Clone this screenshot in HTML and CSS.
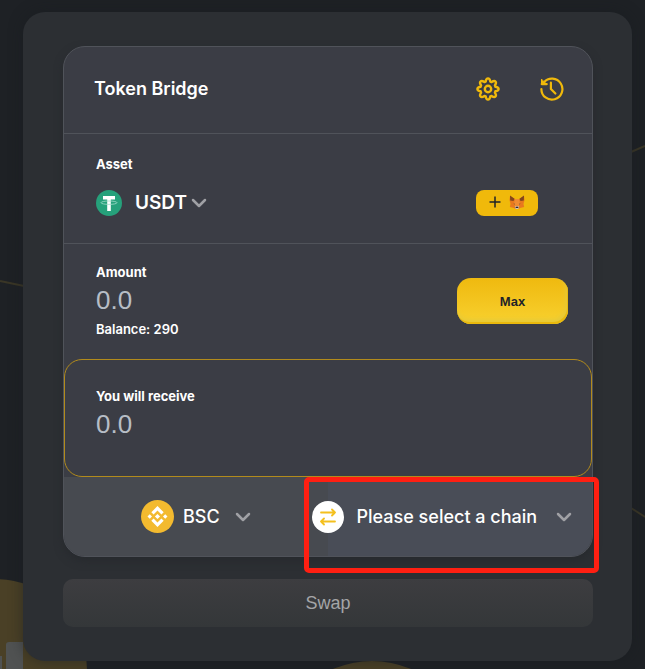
FILE: index.html
```html
<!DOCTYPE html>
<html lang="en">
<head>
<meta charset="utf-8">
<meta name="viewport" content="width=device-width, initial-scale=1">
<title>Token Bridge</title>
<link rel="stylesheet" href="styles.css">
</head>
<body>
<svg class="backdrop" viewBox="0 0 645 669" preserveAspectRatio="xMidYMid slice" aria-hidden="true">
  <path d="M0 281l24 5M631 152l14-6M631 508l14 9" stroke="#3a3626" stroke-width="2" fill="none"/>
  <circle cx="-5" cy="671" r="92" fill="#4a4026"/>
  <path d="M6 669v-24q0-3 3-3h14v27zM0 656h2v13h-2z" fill="#505252"/>
  <circle cx="372" cy="760" r="99" fill="#4a4026"/>
</svg>
<main class="shell">
  <section class="panel">
    <header class="row header">
      <h1 class="title">Token Bridge</h1>
      <div class="tools">
        <button class="icon-button" type="button" aria-label="Settings">
          <svg viewBox="0 0 24 24" fill="none" stroke="currentColor" stroke-width="2.4" stroke-linejoin="round">
            <path d="M9.7 4.6C10.1 2.3 10.7 1.400 12 1.400s1.900.9 2.300 3.200l1.300.5c1.900-1.300 3-1.500 3.900-.6s.7 2-.6 3.900l.5 1.300c2.300.4 3.200 1 3.200 2.300s-.9 1.900-3.200 2.300l-.5 1.300c1.300 1.900 1.500 3 .6 3.900s-2 .7-3.900-.6l-1.300.5c-.4 2.300-1 3.200-2.300 3.200s-1.900-.9-2.300-3.200l-1.300-.5c-1.900 1.300-3 1.500-3.900.6s-.7-2 .6-3.900l-.5-1.300C2.300 13.900 1.400 13.300 1.400 12s.9-1.900 3.200-2.300l.5-1.300C3.800 6.500 3.600 5.400 4.500 4.500s2-.7 3.900.6z"/>
            <circle cx="12" cy="12" r="3.200"/>
          </svg>
        </button>
        <button class="icon-button" type="button" aria-label="History">
          <svg viewBox="0 0 24 24" fill="none" stroke="currentColor" stroke-width="2.2" stroke-linecap="round" stroke-linejoin="round">
            <path d="M1.400 12A10.500 10.500 0 1 0 4 5.200"/>
            <path d="M1.500 2.500v5h5z" fill="currentColor" stroke-width="1"/>
            <path d="M1.700 7.100h5M10.900 5.700V12l4.500 4.500"/>
          </svg>
        </button>
      </div>
    </header>

    <div class="row asset">
      <div class="field">
        <label class="label" for="asset">Asset</label>
        <div class="picker token">
          <svg class="token-icon" viewBox="0 0 26 26" aria-hidden="true">
            <circle cx="13" cy="13" r="13" fill="#26a17b"/>
            <path d="M7 6h12v3.500h-4.200V21h-3.600V9.500H7z" fill="#fff"/>
            <ellipse cx="13" cy="12.700" rx="8" ry="1.700" fill="none" stroke="#a5dccb" stroke-width=".8"/>
          </svg>
          <select class="select select-token" id="asset"><option>USDT</option></select>
          <svg class="chevron" viewBox="0 0 16 10" aria-hidden="true"><path d="M2 2l6 6 6-6"/></svg>
        </div>
      </div>
      <button class="wallet" type="button" aria-label="Add token to wallet">
        <svg class="plus" viewBox="0 0 12 12" aria-hidden="true"><path d="M6 .5v11M.5 6h11"/></svg>
        <svg class="fox" viewBox="0 0 16 14" aria-hidden="true">
          <path d="M1 1l5 3h4l5-3 .5 4-1 4 .7 3-4.200 1-1.500 1h-3L5 13l-4.200-1 .7-3-1-4z" fill="#e8781e"/>
          <path d="M1 .5l4.500 3.300L4.500 6l-3.300-.5zM15 .5l-4.500 3.300 1 2.200 3.300-.5z" fill="#80451d"/>
          <path d="M6 4h4l1 5-1.500 3h-3L5 9z" fill="#f08b32"/>
          <path d="M4.500 8.500l1.500.2-.4 1zM11.500 8.500l-1.500.2.4 1z" fill="#6b4a35"/>
          <path d="M5.800 11.300h4.400l-.8 2.700H6.600z" fill="#d5bfb2"/>
          <path d="M6.900 11.700h2.200l.3 1.200H6.600z" fill="#292b31"/>
        </svg>
      </button>
    </div>

    <div class="row amount">
      <div class="field grow">
        <label class="label" for="amount">Amount</label>
        <input class="number" id="amount" type="text" inputmode="decimal" placeholder="0.0">
        <p class="balance">Balance: 290</p>
      </div>
      <button class="max" type="button">Max</button>
    </div>

    <div class="receive">
      <label class="label" for="receive">You will receive</label>
      <input class="number" id="receive" type="text" placeholder="0.0" readonly>
    </div>

    <div class="chains">
      <div class="chain chain-from">
        <svg class="chain-icon" viewBox="0 0 33 33" aria-hidden="true">
          <circle cx="16.500" cy="16.500" r="16.500" fill="#f3ba2f"/>
          <g fill="#fff" transform="translate(6.500 6.500) scale(.833)">
            <path d="M7.300 9.600L12 4.900l4.700 4.700 2.700-2.700L12-.5 4.600 6.900zM0 12l2.700-2.700L5.400 12l-2.700 2.700zM7.300 14.400L12 19.100l4.700-4.700 2.700 2.700L12 24.500l-7.400-7.400zM18.600 12l2.700-2.700L24 12l-2.700 2.700zM8.900 12L12 8.900l3.100 3.100-3.100 3.100z"/>
          </g>
        </svg>
        <select class="select" aria-label="Source chain"><option>BSC</option></select>
        <svg class="chevron" viewBox="0 0 16 10" aria-hidden="true"><path d="M2 2l6 6 6-6"/></svg>
      </div>
      <div class="chain chain-to">
        <select class="select" aria-label="Destination chain"><option>Please select a chain</option></select>
        <svg class="chevron" viewBox="0 0 16 10" aria-hidden="true"><path d="M2 2l6 6 6-6"/></svg>
        <button class="switch" type="button" aria-label="Switch chains">
          <svg viewBox="0 0 16 18" aria-hidden="true"><path d="M1 4.500h14M12 1.500l3 3-3 3M15 13.500H1M4 10.500l-3 3 3 3"/></svg>
        </button>
        <div class="highlight"></div>
      </div>
    </div>
  </section>
  <button class="swap" type="button" disabled>Swap</button>
</main>
</body>
</html>
```
FILE: styles.css
```css
* {
  box-sizing: border-box;
}

body {
  margin: 0;
  min-height: 100vh;
  padding: 12px 13px 8px 23px;
  background: #1e2125;
  color: #fff;
  font-family: Inter, "Liberation Sans", sans-serif;
  position: relative;
  overflow-x: hidden;
}

h1,
p {
  margin: 0;
}

button,
input,
select {
  margin: 0;
  padding: 0;
  border: 0;
  background: none;
  color: inherit;
  font: inherit;
}

svg {
  display: block;
  flex: none;
}

.backdrop {
  position: absolute;
  inset: 0;
  width: 100%;
  height: 100%;
}

.shell {
  position: relative;
  padding: 34px 39px 34px 40px;
  border-radius: 22px;
  background: #2c2f33;
  box-shadow: 0 0 14px #191c2088;
}

.panel {
  border: 1px solid #50535a;
  border-radius: 22px;
  background: #3b3d45;
  box-shadow: 0 4px 8px #272a2e;
}

.row {
  display: flex;
  justify-content: space-between;
}

.header {
  align-items: center;
  min-height: 87px;
  padding: 0 28px 2px 30px;
  border-bottom: 1px solid #50535a;
}

.title {
  font-size: 18px;
  line-height: 24px;
  font-weight: 600;
}

.tools {
  display: flex;
  gap: 40px;
  color: #f0b90b;
}

.icon-button,
.icon-button svg {
  display: block;
  width: 24px;
  height: 24px;
}

.asset {
  align-items: flex-end;
  padding: 20px 54px 27px 32px;
  border-bottom: 1px solid #50535a;
}

.label {
  display: block;
  font-size: 13px;
  line-height: 20px;
  font-weight: 700;
}

.picker {
  display: flex;
  align-items: center;
}

.token {
  margin-top: 16px;
}

.token-icon {
  width: 26px;
  height: 26px;
  margin-right: 13px;
}

.select {
  appearance: none;
  font-size: 18px;
  line-height: 26px;
  font-weight: 500;
}

.select option {
  color: #1e2125;
}

.select-token {
  font-size: 19px;
  font-weight: 600;
  margin-right: 3px;
}

.chevron {
  width: 16px;
  height: 10px;
  fill: none;
  stroke: #a0a1a5;
  stroke-width: 2.5;
  stroke-linecap: round;
  stroke-linejoin: round;
}

.wallet {
  display: flex;
  align-items: center;
  justify-content: center;
  gap: 8px;
  width: 62px;
  height: 26px;
  padding-bottom: 2px;
  border-radius: 8px;
  background: #f0b90b;
}

.plus {
  width: 12px;
  height: 12px;
  fill: none;
  stroke: #1e2329;
  stroke-width: 1.5;
}

.fox {
  width: 16px;
  height: 14px;
}

.amount {
  align-items: center;
  padding: 18px 24px 19px 32px;
}

.grow {
  flex: 1;
  min-width: 0;
}

.number {
  display: block;
  width: 100%;
  height: 37px;
  outline: 0;
  font-family: "Liberation Sans", Arial, sans-serif;
  font-size: 26px;
}

.number::placeholder {
  color: #b7bdc6;
  opacity: 1;
}

.balance {
  margin-bottom: 1px;
  font-size: 13px;
  line-height: 20px;
  font-weight: 600;
}

.max {
  width: 111px;
  height: 46px;
  border-radius: 14px;
  background: linear-gradient(#efb90f, #f8d12f);
  box-shadow: inset -1px -2px 0 #e9b90d, inset -2px -4px 5px #e2c83b;
  color: #1e2329;
  font-family: "Liberation Sans", Arial, sans-serif;
  font-size: 13px;
  font-weight: 700;
}

.receive {
  padding: 26px 31px 33px;
  border: 1px solid #b28b1c;
  border-radius: 18px;
}

.chains {
  display: grid;
  grid-template-columns: 1fr 1fr;
  min-height: 79px;
}

.chain {
  position: relative;
  display: flex;
  align-items: center;
  justify-content: center;
}

.chain .chevron {
  margin-left: 15px;
}

.chain-from {
  border-radius: 0 0 0 21px;
  background: #474a50;
}

.chain-to {
  padding-left: 8px;
  border-radius: 0 0 21px 0;
  background: #494d57;
}

.chain-to .chevron {
  margin-left: 18px;
}

.chain-icon {
  width: 33px;
  height: 33px;
  margin-right: 9px;
}

.switch {
  position: absolute;
  top: 50%;
  left: 0;
  display: grid;
  place-items: center;
  width: 32px;
  height: 32px;
  border-radius: 50%;
  background: #fff;
  transform: translate(-50%, -50%);
}

.switch svg {
  width: 16px;
  height: 18px;
  fill: none;
  stroke: #f4c01e;
  stroke-width: 1.8;
  stroke-linecap: round;
  stroke-linejoin: round;
}

.highlight {
  position: absolute;
  inset: 0 -7px -17px -24px;
  border: 5px solid #ff1f12;
  border-radius: 5px;
  pointer-events: none;
}

.swap {
  display: block;
  width: 100%;
  height: 48px;
  margin-top: 22px;
  border-radius: 10px;
  background: linear-gradient(#3d3d40, #343739);
  color: #a4a5a7;
  font-family: "Liberation Sans", Arial, sans-serif;
  font-size: 18px;
}
```
